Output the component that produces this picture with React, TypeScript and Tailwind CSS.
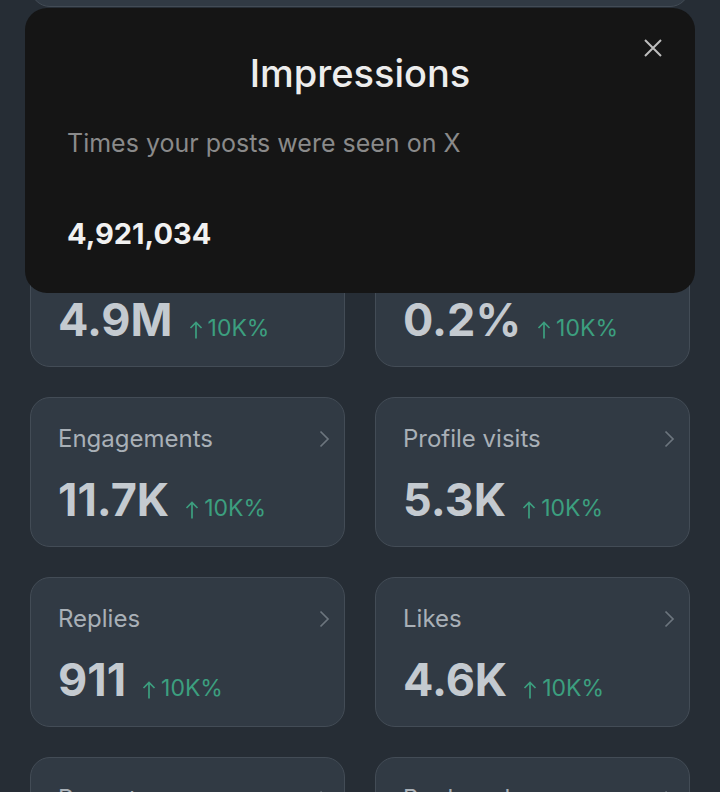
type Metric = {
  label: string;
  value: string;
  change: string;
};

const metrics: Metric[] = [
  { label: "Verified followers", value: "1.2K", change: "10K%" },
  { label: "Follows", value: "3.4K", change: "10K%" },
  { label: "Impressions", value: "4.9M", change: "10K%" },
  { label: "Engagement rate", value: "0.2%", change: "10K%" },
  { label: "Engagements", value: "11.7K", change: "10K%" },
  { label: "Profile visits", value: "5.3K", change: "10K%" },
  { label: "Replies", value: "911", change: "10K%" },
  { label: "Likes", value: "4.6K", change: "10K%" },
  { label: "Reposts", value: "1.1K", change: "10K%" },
  { label: "Bookmarks", value: "2.8K", change: "10K%" },
];

function UpArrow() {
  return (
    <svg width="14" height="18" viewBox="0 0 14 18" fill="none" className="mb-[1px]">
      <path d="M7 17.5V1.5M1.5 7L7 1.5L12.5 7" stroke="currentColor" strokeWidth="1.7" />
    </svg>
  );
}

function Chevron() {
  return (
    <svg width="11" height="18" viewBox="0 0 11 18" fill="none">
      <path d="M1.5 1.5L9 9L1.5 16.5" stroke="currentColor" strokeWidth="1.7" />
    </svg>
  );
}

function MetricCard({ metric }: { metric: Metric }) {
  return (
    <div className="relative h-[150px] rounded-[20px] border border-[#434c56] bg-[#313a44] pl-[27px] pt-[27px]">
      <div className="flex items-center justify-between pr-[14px]">
        <p className="text-[24px] leading-[28px] text-[#a9b0b7]">{metric.label}</p>
        <span className="text-[#6c757e]">
          <Chevron />
        </span>
      </div>
      <div className="mt-[24px] flex items-end gap-[16px]">
        <span className="text-[45px] font-bold leading-[45px] text-[#c4cad0]">{metric.value}</span>
        <span className="mb-[2px] flex items-end gap-[5px] text-[23px] leading-[23px] text-[#3c9f7f]">
          <UpArrow />
          {metric.change}
        </span>
      </div>
    </div>
  );
}

export default function App() {
  return (
    <div className="relative h-[792px] overflow-hidden bg-[#262d35] px-[30px] font-['Inter',sans-serif]">
      <div className="-mt-[93px] flex flex-col gap-[30px]">
        {/* summary card scrolled mostly off screen */}
        <div className="h-[100px] rounded-[20px] border border-[#434c56] bg-[#313a44]" />
        <div className="grid grid-cols-2 gap-[30px]">
          {metrics.map((m) => (
            <MetricCard key={m.label} metric={m} />
          ))}
        </div>
      </div>

      {/* Info sheet */}
      <div className="absolute left-[25px] top-[8px] h-[285px] w-[670px] rounded-[22px] bg-[#151515] px-[42px]">
        <button className="absolute right-[32px] top-[30px] text-[#bdbdbd]">
          <svg width="20" height="20" viewBox="0 0 20 20" fill="none">
            <path d="M2 2L18 18M18 2L2 18" stroke="currentColor" strokeWidth="2" />
          </svg>
        </button>
        <h2 className="pt-[42px] text-center text-[38px] font-medium leading-[46px] text-[#ededed]">
          Impressions
        </h2>
        <p className="mt-[32px] text-[25px] leading-[30px] text-[#8a8a8a]">
          Times your posts were seen on X
        </p>
        <p className="mt-[58px] text-[29px] font-bold leading-[36px] text-[#f1f1f1]">4,921,034</p>
      </div>
    </div>
  );
}
